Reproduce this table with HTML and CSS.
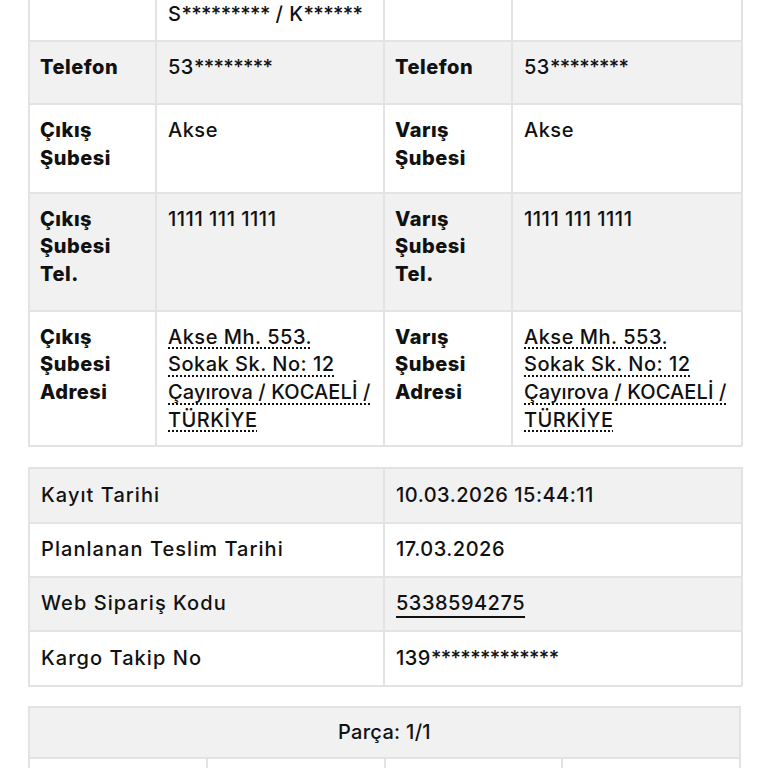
FILE: index.html
```html
<!DOCTYPE html>
<html lang="tr">
<head>
<meta charset="utf-8">
<link rel="stylesheet" href="styles.css">
</head>
<body>
<div class="page">
  <table class="grid">
    <colgroup>
      <col class="c-lbl1"><col class="c-val1"><col class="c-lbl2"><col class="c-val2">
    </colgroup>
    <tr class="row-white">
      <th class="first">Ad Soyad</th>
      <td class="first">Gönderen<br>S<span class="mask">*********</span> / K<span class="mask">******</span></td>
      <th class="first">Ad Soyad</th>
      <td class="first"></td>
    </tr>
    <tr class="row-gray">
      <th>Telefon</th>
      <td>53<span class="mask">********</span></td>
      <th>Telefon</th>
      <td>53<span class="mask">********</span></td>
    </tr>
    <tr class="row-white two">
      <th>Çıkış<br>Şubesi</th>
      <td>Akse</td>
      <th>Varış<br>Şubesi</th>
      <td>Akse</td>
    </tr>
    <tr class="row-gray">
      <th>Çıkış<br>Şubesi<br>Tel.</th>
      <td>1111 111 1111</td>
      <th>Varış<br>Şubesi<br>Tel.</th>
      <td>1111 111 1111</td>
    </tr>
    <tr class="row-white addr">
      <th>Çıkış<br>Şubesi<br>Adresi</th>
      <td><span class="dotted">Akse Mh. 553.<br>Sokak Sk. No: 12<br><span class="tight">Çayırova / KOCAELİ /</span><br>TÜRKİYE</span></td>
      <th>Varış<br>Şubesi<br>Adresi</th>
      <td><span class="dotted">Akse Mh. 553.<br>Sokak Sk. No: 12<br><span class="tight">Çayırova / KOCAELİ /</span><br>TÜRKİYE</span></td>
    </tr>
  </table>

  <table class="info">
    <colgroup><col class="c-half1"><col class="c-half2"></colgroup>
    <tr class="row-gray"><td>Kayıt Tarihi</td><td>10.03.2026 15:44:11</td></tr>
    <tr class="row-white"><td>Planlanan Teslim Tarihi</td><td>17.03.2026</td></tr>
    <tr class="row-gray"><td>Web Sipariş Kodu</td><td><a class="link" href="#">5338594275</a></td></tr>
    <tr class="row-white"><td>Kargo Takip No</td><td>139<span class="mask">*************</span></td></tr>
  </table>

  <table class="parts">
    <colgroup><col class="c-q"><col class="c-q"><col class="c-q"><col class="c-q"></colgroup>
    <tr class="row-gray"><th colspan="4" class="parts-head">Parça: 1/1</th></tr>
    <tr class="row-white"><td></td><td></td><td></td><td></td></tr>
  </table>
</div>
</body>
</html>
```

FILE: styles.css
```css
html, body {
  margin: 0;
  padding: 0;
  background: #ffffff;
}
body {
  font-family: Inter, "Noto Sans", "Liberation Sans", sans-serif;
  color: #111111;
  font-size: 20px;
  font-weight: 500;
  letter-spacing: 0.5px;
  line-height: 27.7px;
}
.page {
  margin: -41px 27px 0 28px;
  display: flex;
  flex-direction: column;
  gap: 20px;
}
table {
  width: 100%;
  border-collapse: collapse;
  table-layout: fixed;
}
th, td {
  border: 2px solid #e3e3e3;
  text-align: left;
  vertical-align: top;
  padding: 12px 11px 21px 11px;
  white-space: nowrap;
}
th {
  font-weight: 800;
  padding-left: 10px;
}
.row-gray { background: #f1f1f1; }
.row-white { background: #ffffff; }
.c-lbl1 { width: 127px; }
.c-val1 { width: 228px; }
.c-lbl2 { width: 128px; }
.c-val2 { width: 230px; }
.c-q { width: 25%; }
.mask { letter-spacing: -0.6px; }
.tight { letter-spacing: 0.1px; }
.grid td.first, .grid th.first { padding-bottom: 12px; }
.two th, .two td { padding-bottom: 19px; }
.addr th, .addr td { padding-bottom: 11px; }
.dotted {
  text-decoration: underline dotted #111;
  text-underline-offset: 4px;
}
.info td {
  padding: 12.3px 11px 12.3px 11px;
  vertical-align: middle;
}
.info td:first-child { letter-spacing: 1.05px; }
.c-half1 { width: 355px; }
.c-half2 { width: 358px; }
.link {
  color: #111;
  text-decoration: underline;
  text-decoration-thickness: 2px;
  text-underline-offset: 6px;
}
.parts {
  margin-top: -1px;
}
.parts th, .parts td {
  padding: 11px;
}
.parts-head {
  text-align: center;
  font-weight: 500;
  letter-spacing: 0.3px;
  padding: 9px 11px 10px 11px;
}
.parts td { height: 30px; }
```
